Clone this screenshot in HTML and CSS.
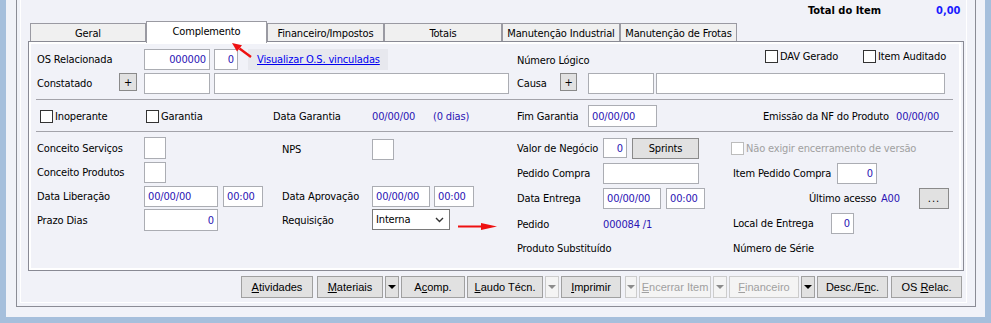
FILE: index.html
```html
<!DOCTYPE html>
<html lang="pt-BR">
<head>
<meta charset="utf-8">
<title>Complemento</title>
<link rel="stylesheet" href="styles.css">
</head>
<body>
<div class="window">
  <div class="frame">
    <div class="inner">
      <div class="header">
        <span class="total-label">Total do Item</span>
        <span class="total-value">0,00</span>
      </div>
      <div class="tabs">
        <div class="tab t116">Geral</div>
        <div class="tab active t121">Complemento</div>
        <div class="tab t117">Financeiro/Impostos</div>
        <div class="tab t118">Totais</div>
        <div class="tab t118">Manutenção Industrial</div>
        <div class="tab t117">Manutenção de Frotas</div>
      </div>
      <div class="panel">
        <div class="page">
          <div class="row r1">
            <span class="lab w107">OS Relacionada</span>
            <div class="inp r w66">000000</div>
            <div class="inp r w24 ml4">0</div>
            <div class="linkbox ml10"><a href="#">Visualizar O.S. vinculadas</a></div>
            <span class="lab w248 ml129 down1">Número Lógico</span>
            <span class="chk top w98"><span class="box"></span>DAV Gerado</span>
            <span class="chk top"><span class="box"></span>Item Auditado</span>
          </div>
          <div class="row r2">
            <span class="lab w82">Constatado</span>
            <div class="plus w18">+</div>
            <div class="inp w66 ml7"></div>
            <div class="inp w295 ml4"></div>
            <span class="lab w43 ml8">Causa</span>
            <div class="plus w17">+</div>
            <div class="inp w66 ml11"></div>
            <div class="inp w289 ml2"></div>
          </div>
          <div class="sep"></div>
          <div class="row r3">
            <span class="chk w106"><span class="box"></span>Inoperante</span>
            <span class="chk w127"><span class="box"></span>Garantia</span>
            <span class="lab w99">Data Garantia</span>
            <span class="val w61">00/00/00</span>
            <span class="val w84">(0 dias)</span>
            <span class="lab w71">Fim Garantia</span>
            <div class="inp w69 h22">00/00/00</div>
            <span class="lab w133 ml106">Emissão da NF do Produto</span>
            <span class="val">00/00/00</span>
          </div>
          <div class="sep sep2"></div>
          <div class="cols">
            <div class="colL">
              <div class="row">
                <span class="lab w107">Conceito Serviços</span>
                <div class="inp w22 h22"></div>
                <span class="lab w90 ml116 down2">NPS</span>
                <div class="inp w22 h21 nps"></div>
              </div>
              <div class="row">
                <span class="lab w107">Conceito Produtos</span>
                <div class="inp w22 h21"></div>
              </div>
              <div class="row">
                <span class="lab w107">Data Liberação</span>
                <div class="inp w74">00/00/00</div>
                <div class="inp w40 ml5">00:00</div>
                <span class="lab w90 ml19">Data Aprovação</span>
                <div class="inp w58">00/00/00</div>
                <div class="inp w40 ml4">00:00</div>
              </div>
              <div class="row">
                <span class="lab w107">Prazo Dias</span>
                <div class="inp r w74 h22">0</div>
                <span class="lab w90 ml64">Requisição</span>
                <div class="sel w78">
                  <span>Interna</span>
                  <svg class="chev" width="9" height="6" viewBox="0 0 9 6"><path d="M1 1 L4.5 4.5 L8 1" fill="none" stroke="#333" stroke-width="1.4"/></svg>
                </div>
              </div>
            </div>
            <div class="colR">
              <div class="row">
                <div class="cellA">
                  <span class="lab w86">Valor de Negócio</span>
                  <div class="inp r w24 h20">0</div>
                  <div class="btn w67 h20 ml5">Sprints</div>
                </div>
                <div class="cellB">
                  <span class="chk dis"><span class="box"></span>Não exigir encerramento de versão</span>
                </div>
              </div>
              <div class="row">
                <div class="cellA">
                  <span class="lab w86">Pedido Compra</span>
                  <div class="inp w96"></div>
                </div>
                <div class="cellB pl2">
                  <span class="lab w104">Item Pedido Compra</span>
                  <div class="inp r w40">0</div>
                </div>
              </div>
              <div class="row">
                <div class="cellA">
                  <span class="lab w86">Data Entrega</span>
                  <div class="inp w58">00/00/00</div>
                  <div class="inp w39 ml5">00:00</div>
                </div>
                <div class="cellB">
                  <span class="lab w72 ml78">Último acesso</span>
                  <span class="val w38">A00</span>
                  <div class="btn w30 dots">...</div>
                </div>
              </div>
              <div class="row">
                <div class="cellA">
                  <span class="lab w86 down2">Pedido</span>
                  <span class="val down2">000084 /1</span>
                </div>
                <div class="cellB pl2">
                  <span class="lab w98">Local de Entrega</span>
                  <div class="inp r w23">0</div>
                </div>
              </div>
              <div class="row">
                <div class="cellA">
                  <span class="lab">Produto Substituído</span>
                </div>
                <div class="cellB pl2">
                  <span class="lab">Número de Série</span>
                </div>
              </div>
            </div>
          </div>
        </div>
      </div>
      <div class="btnbar">
        <div class="b w72"><span><u>A</u>tividades</span></div>
        <div class="b w66 ml2"><span><u>M</u>ateriais</span></div>
        <div class="b dd w14"><span class="tri"></span></div>
        <div class="b w64"><span>A<u>c</u>omp.</span></div>
        <div class="b w76"><span><u>L</u>audo Técn.</span></div>
        <div class="b dd dis w14"><span class="tri"></span></div>
        <div class="b w60"><span><u>I</u>mprimir</span></div>
        <div class="b dd dis w12 ml2"><span class="tri"></span></div>
        <div class="b dis w72"><span><u>E</u>ncerrar Item</span></div>
        <div class="b dd dis w14"><span class="tri"></span></div>
        <div class="b dis w70"><span><u>F</u>inanceiro</span></div>
        <div class="b dd w14"><span class="tri"></span></div>
        <div class="b w71"><span>Desc./E<u>n</u>c.</span></div>
        <div class="b w71 ml1"><span>OS <u>R</u>elac.</span></div>
      </div>
    </div>
  </div>
  <svg class="annot" width="991" height="323" viewBox="0 0 991 323">
    <line x1="251" y1="57" x2="239.5" y2="48.5" stroke="#ee1111" stroke-width="2.4"/>
    <polygon points="232,43 242,45.2 237,51.5" fill="#ee1111"/>
    <line x1="458" y1="226.5" x2="484" y2="226.5" stroke="#ee1111" stroke-width="2"/>
    <polygon points="481,223 497,226.5 481,230" fill="#ee1111"/>
  </svg>
</div>
</body>
</html>
```

FILE: styles.css
```css
* { box-sizing: border-box; }
html, body { margin: 0; padding: 0; }
body {
  width: 991px;
  height: 323px;
  overflow: hidden;
  background: #a6bfdc;
  font-family: "DejaVu Sans Condensed", "DejaVu Sans", sans-serif;
  font-size: 11px;
  letter-spacing: -0.15px;
  color: #000;
}
.window {
  position: relative;
  margin-left: 6px;
  width: 979px;
  height: 317px;
  background: #f1f2f8;
  padding-left: 10px;
}
.frame {
  width: 960px;
  height: 307px;
  border: 1px solid #8b8c95;
  border-top: none;
  padding-left: 3px;
}
.inner {
  width: 947px;
  height: 303px;
  border: 1px solid #fff;
  border-top: none;
}
.header {
  height: 21px;
  display: flex;
  align-items: center;
  justify-content: flex-end;
  padding-right: 6px;
  font-weight: bold;
  letter-spacing: 0;
}
.total-label { width: 128px; }
.total-value { width: 24px; text-align: right; color: #1a1aff; }

.tabs {
  position: relative;
  z-index: 2;
  height: 20px;
  display: flex;
  align-items: flex-end;
  margin-left: 9px;
}
.tab {
  height: 18px;
  border: 1px solid #9a9aa2;
  border-bottom: none;
  background: #f0f0f0;
  display: flex;
  align-items: center;
  justify-content: center;
  padding-top: 1px;
  white-space: nowrap;
}
.tab.active {
  height: 22px;
  margin-bottom: -2px;
  background: #fff;
  padding-top: 0;
  padding-bottom: 3px;
}
.t116 { width: 116px; }
.t117 { width: 117px; }
.t118 { width: 118px; }
.t121 { width: 121px; }

.panel {
  margin-left: 7px;
  width: 936px;
  height: 230px;
  border: 1px solid #898a94;
  padding-right: 2px;
  background: #f1f2f8;
}
.page {
  height: 100%;
  border: 2px solid #fff;
}

.row { display: flex; align-items: center; }
.row > *, .cellA > *, .cellB > * { flex-shrink: 0; }
.r1 { margin-top: 5px; height: 21px; padding-left: 6px; }
.r2 { margin-top: 3px; height: 21px; padding-left: 6px; }
.r3 { margin-top: 5px; height: 22px; padding-left: 9px; }
.sep { height: 1px; background: #a3a3aa; margin: 5px 6px 0 5px; }
.sep2 { margin-top: 4px; }

.cols { display: flex; margin-top: 5px; }
.colL { width: 486px; padding-left: 6px; display: flex; flex-direction: column; gap: 2px; }
.colR { flex: 1; display: flex; flex-direction: column; gap: 3px; }
.colL .row, .colR .row { height: 22px; }
.cellA { width: 214px; display: flex; align-items: center; }
.cellB { flex: 1; display: flex; align-items: center; }
.pl2 { padding-left: 2px; }

.lab { white-space: nowrap; }
.val { white-space: nowrap; color: #2a14b4; }
.down1 { padding-top: 2px; }
.down2 { padding-top: 3px; }

.inp {
  height: 21px;
  border: 1px solid #abadb3;
  background: #fff;
  display: flex;
  align-items: center;
  padding: 0 3px;
  color: #2a14b4;
  white-space: nowrap;
}
.inp.r { justify-content: flex-end; }
.h20 { height: 20px; }
.h21 { height: 21px; }
.h22 { height: 22px; }
.nps { align-self: flex-start; margin-top: 2px; }

.linkbox {
  width: 140px;
  height: 21px;
  background: #e7e8ee;
  display: flex;
  align-items: center;
  padding-left: 9px;
}
.linkbox a { color: #0000ee; text-decoration: underline; white-space: nowrap; }

.plus {
  align-self: flex-start;
  height: 18px;
  background: #e1e1e1;
  border: 1px solid #8a8a8a;
  display: flex;
  align-items: center;
  justify-content: center;
  font-size: 11px;
}

.btn {
  height: 21px;
  background: #e1e1e1;
  border: 1px solid #8a8a8a;
  display: flex;
  align-items: center;
  justify-content: center;
}
.dots { align-items: flex-end; padding-bottom: 3px; letter-spacing: 1px; }

.sel {
  height: 21px;
  border: 1px solid #7a7a7a;
  background: #fff;
  display: flex;
  align-items: center;
  justify-content: space-between;
  padding: 0 5px 0 3px;
  align-self: flex-start;
}
.chev { display: block; }

.chk { display: flex; align-items: center; white-space: nowrap; }
.chk .box {
  width: 13px;
  height: 13px;
  border: 1px solid #333;
  background: #fff;
  margin-right: 2px;
}
.chk.top { align-self: flex-start; margin-top: 1px; }
.chk.dis { color: #a0a0a0; }
.chk.dis .box { border-color: #bcbcbc; }

.btnbar {
  margin-top: 5px;
  height: 22px;
  display: flex;
  justify-content: flex-end;
  gap: 2px;
  padding-right: 4px;
  font-family: "Liberation Sans", Arial, sans-serif;
  font-size: 11px;
  letter-spacing: 0;
}
.b {
  flex-shrink: 0;
  height: 22px;
  border: 1px solid #a0a0a0;
  background: #e1e1e1;
  display: flex;
  align-items: center;
  justify-content: center;
  white-space: nowrap;
}
.b.dis { background: #f4f4f4; border-color: #cccccc; color: #a0a0a0; }
.tri {
  width: 0;
  height: 0;
  border-left: 4px solid transparent;
  border-right: 4px solid transparent;
  border-top: 4px solid #000;
}
.b.dis .tri { border-top-color: #8c8c8c; }

.annot { position: absolute; left: -6px; top: 0; pointer-events: none; z-index: 5; }

.w12 { width: 12px; } .w14 { width: 14px; } .w17 { width: 17px; } .w18 { width: 18px; }
.w22 { width: 22px; } .w23 { width: 23px; } .w24 { width: 24px; } .w30 { width: 30px; }
.w38 { width: 38px; } .w39 { width: 39px; } .w40 { width: 40px; } .w43 { width: 43px; }
.w58 { width: 58px; } .w60 { width: 60px; } .w61 { width: 61px; } .w64 { width: 64px; }
.w66 { width: 66px; } .w67 { width: 67px; } .w69 { width: 69px; } .w70 { width: 70px; }
.w71 { width: 71px; } .w72 { width: 72px; } .w74 { width: 74px; } .w76 { width: 76px; }
.w78 { width: 78px; } .w82 { width: 82px; } .w84 { width: 84px; } .w86 { width: 86px; }
.w90 { width: 90px; } .w96 { width: 96px; } .w98 { width: 98px; } .w99 { width: 99px; }
.w104 { width: 104px; } .w106 { width: 106px; } .w107 { width: 107px; } .w127 { width: 127px; }
.w133 { width: 133px; } .w248 { width: 248px; } .w289 { width: 289px; } .w295 { width: 295px; }
.ml1 { margin-left: 1px; } .ml2 { margin-left: 2px; } .ml4 { margin-left: 4px; } .ml5 { margin-left: 5px; }
.ml7 { margin-left: 7px; } .ml8 { margin-left: 8px; } .ml10 { margin-left: 10px; } .ml11 { margin-left: 11px; }
.ml19 { margin-left: 19px; } .ml64 { margin-left: 64px; } .ml78 { margin-left: 78px; } .ml106 { margin-left: 106px; }
.ml116 { margin-left: 116px; } .ml129 { margin-left: 129px; }
```
